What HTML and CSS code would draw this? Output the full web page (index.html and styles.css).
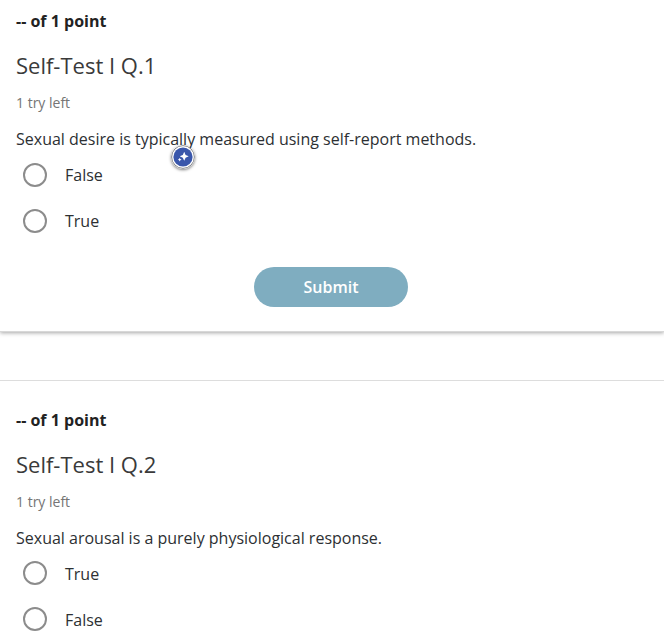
FILE: index.html
```html
<!DOCTYPE html>
<html lang="en">
<head>
    <meta charset="UTF-8">
    <meta name="viewport" content="width=device-width, initial-scale=1.0">
    <title>Self-Test I</title>
    <link rel="stylesheet" href="styles.css">
</head>
<body>

    <!-- Question 1 -->
    <form class="question">
        <p class="points">-- of 1 point</p>
        <h2>Self-Test I Q.1</h2>
        <p class="tries">1 try left</p>
        <p class="prompt">Sexual desire is <span class="lookup">typically
            <svg class="lookup-badge" viewBox="0 0 24 24">
                <circle cx="12" cy="12" r="11.4" fill="#fff" stroke="#85878c" stroke-width="1"/>
                <circle cx="12" cy="12" r="9.6" fill="#3a57ab"/>
                <path d="M13.2 6.8 L14.6 9.9 L17.7 11.3 L14.6 12.7 L13.2 15.8 L11.8 12.7 L8.7 11.3 L11.8 9.9 Z" fill="#fff"/>
                <path d="M8.7 12.8 L9.3 14.1 L10.6 14.7 L9.3 15.3 L8.7 16.6 L8.1 15.3 L6.8 14.7 L8.1 14.1 Z" fill="#fff"/>
            </svg></span> measured using self-report methods.</p>
        <label class="option"><input type="radio" name="q1"><span>False</span></label>
        <label class="option"><input type="radio" name="q1"><span>True</span></label>
        <button type="button" class="submit">Submit</button>
    </form>

    <!-- Question 2 -->
    <form class="question next">
        <p class="points">-- of 1 point</p>
        <h2>Self-Test I Q.2</h2>
        <p class="tries">1 try left</p>
        <p class="prompt">Sexual arousal is a purely physiological response.</p>
        <label class="option"><input type="radio" name="q2"><span>True</span></label>
        <label class="option"><input type="radio" name="q2"><span>False</span></label>
    </form>

</body>
</html>
```
FILE: styles.css
```css
* {
    margin: 0;
    padding: 0;
    box-sizing: border-box;
}

body {
    font-family: "Open Sans", sans-serif;
    font-size: 16px;
    color: #2d3033;
    background: #fff;
}

/* Question card */
.question {
    display: flex;
    flex-direction: column;
    height: 332px;
    padding: 9px 16px 0;
    background: #fff;
    border-bottom: 1px solid #d8d8d8;
    box-shadow: 0 1px 4px rgba(0, 0, 0, 0.35);
}

.question.next {
    height: auto;
    margin-top: 48px;
    padding-top: 27px;
    border-top: 1px solid #ddd;
    border-bottom: none;
    box-shadow: none;
}

.points {
    font-weight: 700;
    line-height: 24px;
    color: #222;
}

h2 {
    margin-top: 14px;
    font-size: 22px;
    font-weight: 400;
    line-height: 36px;
    color: #3a3a3a;
}

.tries {
    margin-top: 8px;
    font-size: 14px;
    line-height: 24px;
    color: #757575;
}

.prompt {
    margin-top: 12px;
    line-height: 24px;
}

/* Lookup badge hanging under the selected word */
.lookup {
    position: relative;
}

.lookup-badge {
    position: absolute;
    left: 36px;
    top: 17px;
    width: 24px;
    height: 24px;
    border-radius: 50%;
    box-shadow: 0 1px 3px rgba(0, 0, 0, 0.5);
}

/* Answers */
.option {
    display: flex;
    align-items: center;
    gap: 18px;
    height: 46px;
    padding-left: 7px;
}

.prompt + .option {
    margin-top: 1px;
}

.option input {
    appearance: none;
    width: 24px;
    height: 24px;
    border: 2px solid #8c8c8c;
    border-radius: 50%;
}

.next .option input {
    margin-bottom: 2px;
}

/* last answer row ends with the window */
.next .option:last-child {
    height: 42px;
    margin: 2px 0 -4px;
}

.submit {
    align-self: center;
    width: 154px;
    height: 40px;
    margin: 23px 2px 0 0;
    font: inherit;
    font-weight: 600;
    color: #fff;
    background: #7fadc0;
    border: none;
    border-radius: 20px;
}
```
